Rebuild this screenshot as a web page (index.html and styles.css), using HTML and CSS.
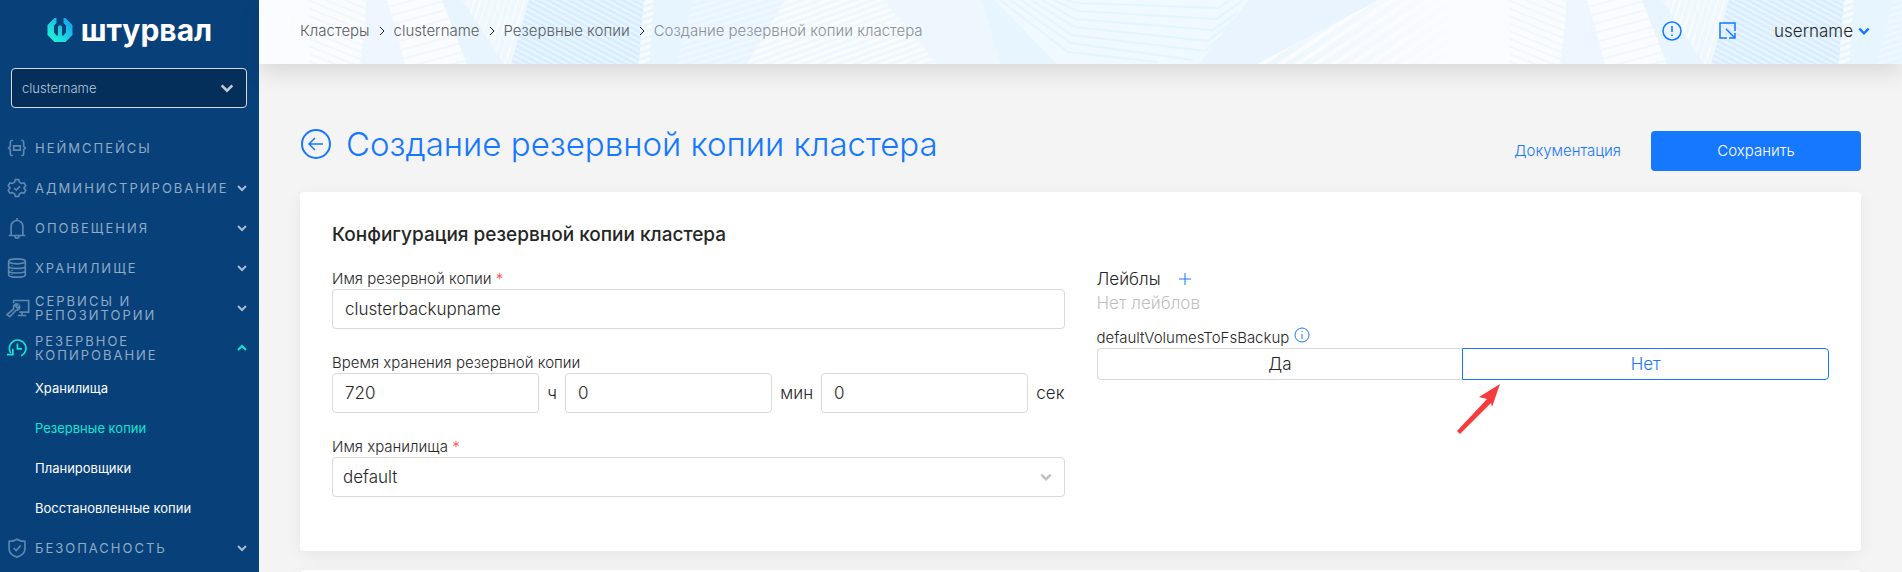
FILE: index.html
```html
<!DOCTYPE html>
<html lang="ru">
  <head>
    <meta charset="UTF-8" />
    <meta name="viewport" content="width=device-width, initial-scale=1.0" />
    <link rel="stylesheet" href="styles.css">
    <title>Создание резервной копии кластера</title>
  </head>
  <body>
    <svg class="sprite" aria-hidden="true">
      <symbol id="down" viewBox="0 0 12 12"><path d="M2 4l4 4 4-4" /></symbol>
      <symbol id="up" viewBox="0 0 12 12"><path d="M2 8l4-4 4 4" /></symbol>
      <symbol id="right" viewBox="0 0 12 12"><path d="M4 2l4 4-4 4" /></symbol>
    </svg>

    <aside class="sidebar">
      <a class="logo" href="#">
        <svg class="logo-mark" viewBox="0 0 26 26">
          <defs>
            <linearGradient id="logoFill" x1="0" y1="1" x2="1" y2="0">
              <stop offset="0.2" stop-color="#1fecd9" />
              <stop offset="1" stop-color="#1498f0" />
            </linearGradient>
          </defs>
          <path fill="url(#logoFill)" d="M7.500 1h2v5L7 8.500v7l2.500 3H11V9.500l2-1.500 2 1.500v9h1.500l2.500-3v-7L16.500 6V1h2L25.500 8v10l-7 7h-11l-7-7V8z" />
        </svg>
        <span>штурвал</span>
      </a>

      <div class="cluster">
        <select class="cluster-select" aria-label="Кластер">
          <option>clustername</option>
        </select>
        <svg class="cluster-arrow"><use href="#down" /></svg>
      </div>

      <nav class="menu">
        <a class="menu-item" href="#">
          <svg class="menu-icon" viewBox="0 0 24 24"><path d="M7 3H5.500Q4 3 4 5v5l-2 2 2 2v5q0 2 1.500 2H7M17 3h1.500Q20 3 20 5v5l2 2-2 2v5q0 2-1.500 2H17M8 9.500h8v5H8z" /></svg>
          <span>Неймспейсы</span>
        </a>
        <a class="menu-item" href="#">
          <svg class="menu-icon" viewBox="0 0 24 24"><path d="M10 2h4l1 3 2.500 1.500 3-.7 2 3.500L20.400 12l2.100 2.700-2 3.500-3-.7L15 19l-1 3h-4l-1-3-2.500-1.500-3 .7-2-3.500L3.600 12 1.500 9.300l2-3.500 3 .7L9 5zM8.500 12l2.500 2.500 4.500-4.500" /></svg>
          <span>Администрирование</span>
          <svg class="menu-arrow"><use href="#down" /></svg>
        </a>
        <a class="menu-item" href="#">
          <svg class="menu-icon" viewBox="0 0 24 24"><path d="M2 21h20M5 21V10a7 7 0 0 1 14 0v11M12 3V0M9.500 21.500a2.500 2.500 0 0 0 5 0" /></svg>
          <span>Оповещения</span>
          <svg class="menu-arrow"><use href="#down" /></svg>
        </a>
        <a class="menu-item" href="#">
          <svg class="menu-icon" viewBox="0 0 24 24"><ellipse cx="12" cy="4" rx="10" ry="3" /><path d="M2 4v16c0 4 20 4 20 0V4M2 9.500c0 4 20 4 20 0M2 15c0 4 20 4 20 0M6 9v1M6 14.500v1M6 19v1" /></svg>
          <span>Хранилище</span>
          <svg class="menu-arrow"><use href="#down" /></svg>
        </a>
        <a class="menu-item" href="#">
          <svg class="menu-icon" viewBox="0 0 24 24"><path d="M8 6V3h18v14H15M13 21h10M18 17v4M0 20l8-7q-1-4 3-6l2 .5-2.500 2.500 2 2L15 9.500q1 5-4.500 5.500l-7 7.500z" /></svg>
          <span>Сервисы и репозитории</span>
          <svg class="menu-arrow"><use href="#down" /></svg>
        </a>
        <a class="menu-item active" href="#">
          <svg class="menu-icon" viewBox="0 0 24 24"><path d="M4.500 18A10 10 0 1 1 17 21.500M0 20h7v-7M12.500 6.500V13H18" /></svg>
          <span>Резервное копирование</span>
          <svg class="menu-arrow"><use href="#up" /></svg>
        </a>
        <a class="submenu-item" href="#">Хранилища</a>
        <a class="submenu-item active" href="#">Резервные копии</a>
        <a class="submenu-item" href="#">Планировщики</a>
        <a class="submenu-item" href="#">Восстановленные копии</a>
        <a class="menu-item" href="#">
          <svg class="menu-icon" viewBox="0 0 24 24"><path d="M12 1.500c3 2 6 2.500 9.500 2.500v9c0 5-4.500 8.500-9.500 10-5-1.500-9.500-5-9.500-10V4C6 4 9 3.500 12 1.500zM8 12l3 3 5.500-6" /></svg>
          <span>Безопасность</span>
          <svg class="menu-arrow"><use href="#down" /></svg>
        </a>
      </nav>
    </aside>

    <div class="page">
      <header class="header">
        <svg class="header-art" aria-hidden="true">
          <defs>
            <pattern id="fall" width="8" height="7" patternUnits="userSpaceOnUse" patternTransform="rotate(22)"><path d="M0 3h8" stroke="#f0f7fe" stroke-width="2" /></pattern>
            <pattern id="rise" width="8" height="9" patternUnits="userSpaceOnUse" patternTransform="rotate(-15)"><path d="M0 4h8" stroke="#f0f7fe" stroke-width="2" /></pattern>
            <pattern id="steep" width="6" height="8" patternUnits="userSpaceOnUse" patternTransform="rotate(17)"><path d="M2 0v8" stroke="#f8fcff" stroke-width="2" /></pattern>
            <pattern id="dense" width="8" height="5" patternUnits="userSpaceOnUse" patternTransform="rotate(28)"><path d="M0 2h8" stroke="#e9f6ff" stroke-width="2" /></pattern>
            <pattern id="pale" width="8" height="6" patternUnits="userSpaceOnUse" patternTransform="rotate(-17)"><path d="M0 3h8" stroke="#eff8fe" stroke-width="2" /></pattern>
            <pattern id="white" width="8" height="6" patternUnits="userSpaceOnUse" patternTransform="rotate(-20)"><path d="M0 3h8" stroke="#fafcff" stroke-width="3" /></pattern>
            <pattern id="beam" width="8" height="10" patternUnits="userSpaceOnUse" patternTransform="rotate(-34)"><path d="M0 4h8" stroke="#fafcff" stroke-width="4" /></pattern>
            <linearGradient id="fade"><stop offset="0" stop-color="#edf6fd" /><stop offset="1" stop-color="#fafcff" /></linearGradient>
            <pattern id="art" width="1200" height="64" patternUnits="userSpaceOnUse">
              <path fill="#fafcff" d="M0 0h1200v64H0z" />
              <path fill="url(#fall)" d="M50 0h58l-6 64H50z" />
              <path fill="#eff6ff" d="M108 0h20l18 64h-44z" />
              <path fill="url(#rise)" d="M128 0h55l25 64h-62z" />
              <path fill="#e8f5fe" d="M183 0h87l-18 64h-44z" />
              <path fill="#eff8fe" d="M203 0h67l-18 64h-7z" />
              <path fill="url(#steep)" d="M203 0h67l-18 64h-7z" />
              <path fill="#d9edfe" d="M270 0h115l-5 64H252z" />
              <path fill="url(#dense)" d="M270 0h115l-5 64H252z" />
              <path fill="#e7f5fe" d="M385 0h49l-16 64h-38z" />
              <path fill="url(#white)" d="M385 0h10l-5 64h-10z" />
              <path fill="#e9f5fe" d="M434 0h92l-38 64h-70z" />
              <path fill="url(#pale)" d="M434 0h92l-38 64h-70z" />
              <path fill="#eff7fe" d="M526 0h197l18 64H488z" />
              <path fill="url(#white)" d="M526 0h99l53 64H488z" />
              <path fill="#e6f5fe" d="M723 0h13l62 64h-57z" />
              <path fill="#eff9ff" d="M736 0h254l-50 64H798z" />
              <g fill="none" stroke="#e4f5fd" stroke-width="2">
                <path d="M806 0l13 3 140 5 12-8M795 0l24 11 138 8 26-18M783 0l33 19 138 11 24-17M772 0l43 27 134 14 26-20M762 0l51 35 133 16 16-14M751 0l61 43 122 17M741 0l68 52 90 10" />
              </g>
              <path fill="#e9f4fe" d="M990 0h130L998 64h-58z" />
              <path fill="url(#fade)" d="M1120 0h80v64H998z" />
              <path fill="url(#beam)" d="M1120 0h80v64H998z" />
            </pattern>
          </defs>
          <rect width="100%" height="100%" fill="url(#art)" />
        </svg>
        <nav class="breadcrumbs">
          <a href="#">Кластеры</a>
          <svg><use href="#right" /></svg>
          <a href="#">clustername</a>
          <svg><use href="#right" /></svg>
          <a href="#">Резервные копии</a>
          <svg><use href="#right" /></svg>
          <span>Создание резервной копии кластера</span>
        </nav>
        <div class="header-tools">
          <button class="icon-button" aria-label="Уведомления">
            <svg viewBox="0 0 20 20"><circle cx="10" cy="10" r="9" /><path d="M10 5v6M10 13.500v1.500" /></svg>
          </button>
          <button class="icon-button" aria-label="Развернуть">
            <svg viewBox="0 0 20 20"><path d="M9 17H2V2h15v8M8 8l8 8M11 17h6v-5" /></svg>
          </button>
          <button class="user">username <svg><use href="#down" /></svg></button>
        </div>
      </header>

      <main class="content">
        <div class="title-row">
          <a class="back" href="#" aria-label="Назад">
            <svg viewBox="0 0 32 32"><circle cx="16" cy="16" r="14" /><path d="M23 16H9M15 10l-6 6 6 6" /></svg>
          </a>
          <h1>Создание резервной копии кластера</h1>
          <div class="title-actions">
            <a class="docs" href="#">Документация</a>
            <button class="save" type="submit" form="backupForm">Сохранить</button>
          </div>
        </div>

        <form class="card" id="backupForm">
          <h2>Конфигурация резервной копии кластера</h2>
          <div class="columns">
            <div class="column">
              <div class="field">
                <label for="backupName">Имя резервной копии <span class="required">*</span></label>
                <input class="control" id="backupName" type="text" value="clusterbackupname">
              </div>
              <div class="field">
                <label for="hours">Время хранения резервной копии</label>
                <div class="time">
                  <input class="control" id="hours" type="text" value="720">
                  <label for="hours">ч</label>
                  <input class="control" id="minutes" type="text" value="0">
                  <label for="minutes">мин</label>
                  <input class="control" id="seconds" type="text" value="0">
                  <label for="seconds">сек</label>
                </div>
              </div>
              <div class="field">
                <label for="storage">Имя хранилища <span class="required">*</span></label>
                <div class="select">
                  <select class="control" id="storage">
                    <option>default</option>
                  </select>
                  <svg><use href="#down" /></svg>
                </div>
              </div>
            </div>

            <div class="column">
              <div class="labels">
                <div class="labels-head">
                  <span>Лейблы</span>
                  <button class="add" type="button" aria-label="Добавить лейбл">
                    <svg viewBox="0 0 12 12"><path d="M6 0v12M0 6h12" /></svg>
                  </button>
                </div>
                <p class="labels-empty">Нет лейблов</p>
              </div>
              <fieldset class="switch">
                <legend>
                  defaultVolumesToFsBackup
                  <svg viewBox="0 0 16 16"><circle cx="8" cy="8" r="7" /><path d="M8 7v5M8 4v1" /></svg>
                </legend>
                <div class="options">
                  <label class="option"><input type="radio" name="fsBackup" value="yes">Да</label>
                  <label class="option"><input type="radio" name="fsBackup" value="no" checked>Нет</label>
                  <svg class="pointer" viewBox="0 0 46 52"><path d="M44 1L23 14l8 2L1 48l3 3 31-31 1 4z" /></svg>
                </div>
              </fieldset>
            </div>
          </div>
        </form>

        <section class="card"></section>
      </main>
    </div>
  </body>
</html>
```
FILE: styles.css
```css
*,
*::after,
*::before {
  box-sizing: border-box;
}

:root {
  --blue: #1677ff;
  --navy: #08407a;
  --mint: #12e5d0;
  --border: #d9d9d9;
}

body {
  margin: 0;
  display: grid;
  grid-template-columns: 259px minmax(0, 1fr);
  height: 100vh;
  overflow: hidden;
  background-color: #f4f4f4;
  color: #262626;
  font: 300 17px/20px Inter, "Open Sans", sans-serif;
}

a {
  color: inherit;
  text-decoration: none;
}

button,
input,
select {
  font: inherit;
  color: inherit;
}

button {
  border: none;
  padding: 0;
  background: none;
  cursor: pointer;
}

svg {
  width: 12px;
  height: 12px;
  flex-shrink: 0;
  fill: none;
  stroke: currentColor;
  stroke-width: 2;
}

.sprite {
  position: absolute;
  width: 0;
  height: 0;
}

/* sidebar */

.sidebar {
  background-color: var(--navy);
  overflow: hidden;
}

.logo {
  display: flex;
  justify-content: center;
  align-items: center;
  gap: 8px;
  height: 60px;
  color: white;
  font-size: 30px;
  font-weight: 700;
  line-height: 28px;
}

.logo-mark {
  width: 26px;
  height: 26px;
  stroke: none;
}

.cluster,
.select {
  display: grid;
  align-items: center;
}

.cluster > *,
.select > * {
  grid-area: 1 / 1;
}

.cluster svg,
.select svg {
  justify-self: end;
  margin-right: 12px;
  pointer-events: none;
}

.cluster {
  margin: 8px 12px 20px 11px;
}

.cluster-select {
  width: 100%;
  height: 40px;
  padding: 0 10px;
  appearance: none;
  border: 1px solid #d9d9d9;
  border-radius: 4px;
  background-color: #052f5b;
  color: #b4c8dc;
  font-size: 13px;
}

.cluster .cluster-arrow {
  width: 16px;
  height: 16px;
  color: #c4c9ce;
}

.menu-item,
.submenu-item {
  display: flex;
  align-items: center;
  height: 40px;
}

.menu-item {
  padding: 0 11px 0 7px;
  color: #8fabc6;
  font-size: 13px;
  font-weight: 400;
  line-height: 14px;
  letter-spacing: 2px;
  text-transform: uppercase;
}

.menu-item span {
  flex: 1;
}

.menu-icon {
  width: 20px;
  height: 20px;
  margin-right: 8px;
  overflow: visible;
  color: #5d87ae;
}

.menu-arrow {
  color: #a5bcd2;
}

.menu-item.active .menu-icon,
.menu-item.active .menu-arrow {
  color: var(--mint);
}

.submenu-item {
  padding-left: 35px;
  color: white;
  font-size: 13px;
  font-weight: 400;
}

.submenu-item.active {
  color: var(--mint);
}

/* header */

.header {
  position: relative;
  display: flex;
  justify-content: space-between;
  align-items: center;
  height: 64px;
  padding: 0 31px 2px 41px;
  box-shadow: 0 10px 20px rgba(0, 0, 0, 0.1);
}

.header-art {
  position: absolute;
  inset: 0;
  width: 100%;
  height: 100%;
  stroke: none;
}

.breadcrumbs,
.header-tools {
  position: relative;
  display: flex;
  align-items: center;
}

.breadcrumbs {
  gap: 6px;
  color: #595d61;
  font-size: 15px;
}

.breadcrumbs span {
  color: #8c9094;
}

.breadcrumbs svg {
  color: #222;
  stroke-width: 1;
}

.header-tools {
  gap: 36px;
}

.icon-button {
  display: flex;
  color: var(--blue);
}

.icon-button svg {
  width: 20px;
  height: 20px;
  stroke-width: 1.5;
}

.user {
  display: flex;
  align-items: center;
  gap: 4px;
}

.user svg {
  width: 14px;
  height: 14px;
  color: var(--blue);
}

/* content */

.content {
  padding: 64px 41px 0;
}

.title-row {
  display: flex;
  align-items: flex-start;
  margin-bottom: 18px;
}

.back {
  display: flex;
  margin-right: 14px;
  color: var(--blue);
}

.back svg {
  width: 32px;
  height: 32px;
}

.back path {
  stroke-width: 1.5;
}

h1 {
  flex: 1;
  margin: 0;
  color: var(--blue);
  font-size: 33px;
  font-weight: 300;
  line-height: 32px;
}

.title-actions {
  display: flex;
  align-items: center;
  gap: 30px;
  padding: 3px 0;
}

.docs {
  color: var(--blue);
  font-size: 15px;
}

.save {
  width: 210px;
  height: 40px;
  border-radius: 4px;
  background-color: var(--blue);
  color: white;
  font-size: 15px;
}

.card {
  margin-bottom: 19px;
  padding: 32px 32px 54px;
  border-radius: 4px;
  background-color: white;
  box-shadow: 0 4px 16px rgba(0, 0, 0, 0.06);
}

h2 {
  margin: 0 0 23px;
  font-size: 19px;
  font-weight: 500;
  line-height: 22px;
}

.columns {
  display: grid;
  grid-template-columns: 1fr 1fr;
  gap: 32px;
}

.column {
  display: flex;
  flex-direction: column;
  gap: 24px;
}

.field > label,
.switch legend {
  display: block;
  font-size: 15px;
}

.required {
  color: #ff4d4f;
}

.control {
  display: block;
  width: 100%;
  min-width: 0;
  height: 40px;
  padding: 0 12px;
  appearance: none;
  border: 1px solid var(--border);
  border-radius: 4px;
  background-color: white;
}

select.control {
  padding: 0 10px;
}

.select svg {
  width: 14px;
  height: 14px;
  color: #bfbfbf;
}

.time {
  display: flex;
  align-items: center;
  gap: 8px;
}

.time .control {
  flex: 1;
}

.labels-head {
  display: flex;
  align-items: center;
  gap: 18px;
}

.add {
  display: flex;
  color: var(--blue);
}

.add svg {
  stroke-width: 1;
}

.labels-empty {
  margin: 4px 0 0;
  color: #bfbfbf;
}

.labels {
  margin-bottom: -10px;
}

.switch {
  min-width: 0;
  margin: 0;
  padding: 0;
  border: none;
}

.switch legend {
  padding: 0;
}

.switch legend svg {
  width: 16px;
  height: 16px;
  color: var(--blue);
  stroke-width: 1;
}

.options {
  position: relative;
  display: flex;
}

.option {
  flex: 1;
  height: 32px;
  border: 1px solid var(--border);
  line-height: 30px;
  text-align: center;
  cursor: pointer;
}

.option:first-child {
  border-right: none;
  border-radius: 4px 0 0 4px;
}

.option:nth-child(2) {
  border-radius: 0 4px 4px 0;
}

.option:has(input:checked) {
  border: 1px solid var(--blue);
  color: var(--blue);
}

.option input {
  position: absolute;
  opacity: 0;
}

/* red arrow over the form */
.pointer {
  position: absolute;
  top: 35px;
  left: calc(50% - 7px);
  width: 46px;
  height: 52px;
  fill: #f53b3b;
  stroke: none;
}
```
